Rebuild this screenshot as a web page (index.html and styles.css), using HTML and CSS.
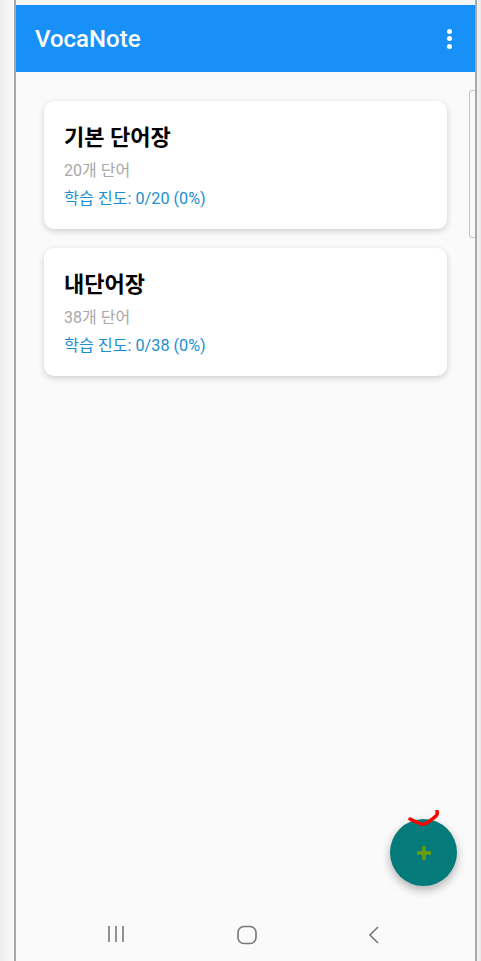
FILE: index.html
```html
<!DOCTYPE html>
<html lang="ko">
<head>
    <meta charset="UTF-8">
    <meta name="viewport" content="width=device-width, initial-scale=1.0">
    <title>VocaNote</title>
    <link rel="stylesheet" href="styles.css">
</head>
<body>
    <div class="phone">
        <div class="status-strip"></div>

        <header class="app-bar">
            <div class="app-title">VocaNote</div>
            <div class="menu-button">
                <span></span><span></span><span></span>
            </div>
        </header>

        <main class="content">
            <div class="scroll-thumb"></div>

            <div class="deck-list">
                <div class="deck-card">
                    <div class="deck-name">기본 단어장</div>
                    <div class="deck-count">20개 단어</div>
                    <div class="deck-progress">학습 진도: 0/20 (0%)</div>
                </div>

                <div class="deck-card">
                    <div class="deck-name">내단어장</div>
                    <div class="deck-count">38개 단어</div>
                    <div class="deck-progress">학습 진도: 0/38 (0%)</div>
                </div>
            </div>

            <button class="fab">
                <svg class="scribble" width="34" height="20" viewBox="0 0 34 20">
                    <path d="M2 9 Q8 12 13 14 Q17 15 20 12 Q25 9 28 6 Q30 4 29 1" fill="none" stroke="#f00" stroke-width="3.5" stroke-linecap="round"/>
                </svg>
                <svg width="18" height="18" viewBox="0 0 18 18">
                    <path d="M9 2 V16 M2 9 H16" stroke="#6b9e0c" stroke-width="3.5"/>
                </svg>
            </button>
        </main>

        <nav class="nav-bar">
            <svg width="20" height="18" viewBox="0 0 20 18">
                <path d="M3 1 V17 M10 1 V17 M17 1 V17" stroke="#777" stroke-width="1.6"/>
            </svg>
            <svg width="22" height="20" viewBox="0 0 22 20">
                <rect x="2" y="1.5" width="18" height="17" rx="6" fill="none" stroke="#777" stroke-width="1.6"/>
            </svg>
            <svg width="14" height="20" viewBox="0 0 14 20">
                <path d="M11 2 L3 10 L11 18" fill="none" stroke="#777" stroke-width="1.6"/>
            </svg>
        </nav>
    </div>
</body>
</html>
```

FILE: styles.css
```css
* {
    margin: 0;
    padding: 0;
    box-sizing: border-box;
}

body {
    font-family: Roboto, 'Noto Sans CJK KR', sans-serif;
    background: linear-gradient(90deg, #eeeeee, #f8f8f8 14px, #f8f8f8 calc(100% - 6px), #e8e8e8);
    height: 961px;
    overflow: hidden;
}

.phone {
    margin-left: 14px;
    width: 463px;
    height: 961px;
    border-left: 2px solid #a8a8a8;
    border-right: 2px solid #a8a8a8;
    background: #fafafa;
    display: flex;
    flex-direction: column;
}

.status-strip {
    height: 5px;
    background: #f4f6f8;
}

.app-bar {
    height: 67px;
    background: #1791f8;
    color: #fff;
    display: flex;
    align-items: center;
    justify-content: space-between;
    padding: 0 23px 0 19px;
}

.app-title {
    font-size: 24px;
    font-weight: 500;
}

.menu-button {
    display: flex;
    flex-direction: column;
    gap: 2.5px;
}

.menu-button span {
    width: 5px;
    height: 5px;
    border-radius: 50%;
    background: #fff;
}

.content {
    flex: 1;
    position: relative;
    padding: 29px 28px;
}

.scroll-thumb {
    position: absolute;
    top: 18px;
    right: 0;
    width: 6px;
    height: 148px;
    border: 1px solid #c4c4c4;
    border-right: none;
    border-radius: 4px 0 0 4px;
}

.deck-list {
    display: flex;
    flex-direction: column;
    gap: 19px;
}

.deck-card {
    background: #fff;
    border-radius: 10px;
    box-shadow: 0 2px 6px rgba(0, 0, 0, 0.18);
    padding: 23px 20px 18px;
    height: 128px;
}

.deck-name {
    font-size: 22px;
    font-weight: 700;
    color: #000;
    line-height: 28px;
}

.deck-count {
    font-size: 16px;
    color: #a8a8a8;
    line-height: 22px;
    margin-top: 8px;
}

.deck-progress {
    font-size: 16.2px;
    color: #1b8fd2;
    line-height: 22px;
    margin-top: 6px;
}

.fab {
    position: absolute;
    right: 18px;
    bottom: 24px;
    width: 67px;
    height: 67px;
    border: none;
    border-radius: 50%;
    background: #047a7a;
    box-shadow: 0 4px 10px rgba(0, 0, 0, 0.3);
    display: flex;
    align-items: center;
    justify-content: center;
}

.scribble {
    position: absolute;
    top: -9px;
    left: 18px;
}

.nav-bar {
    height: 51px;
    display: flex;
    align-items: flex-start;
    justify-content: space-between;
    padding: 15px 94px 0 90px;
}
```
